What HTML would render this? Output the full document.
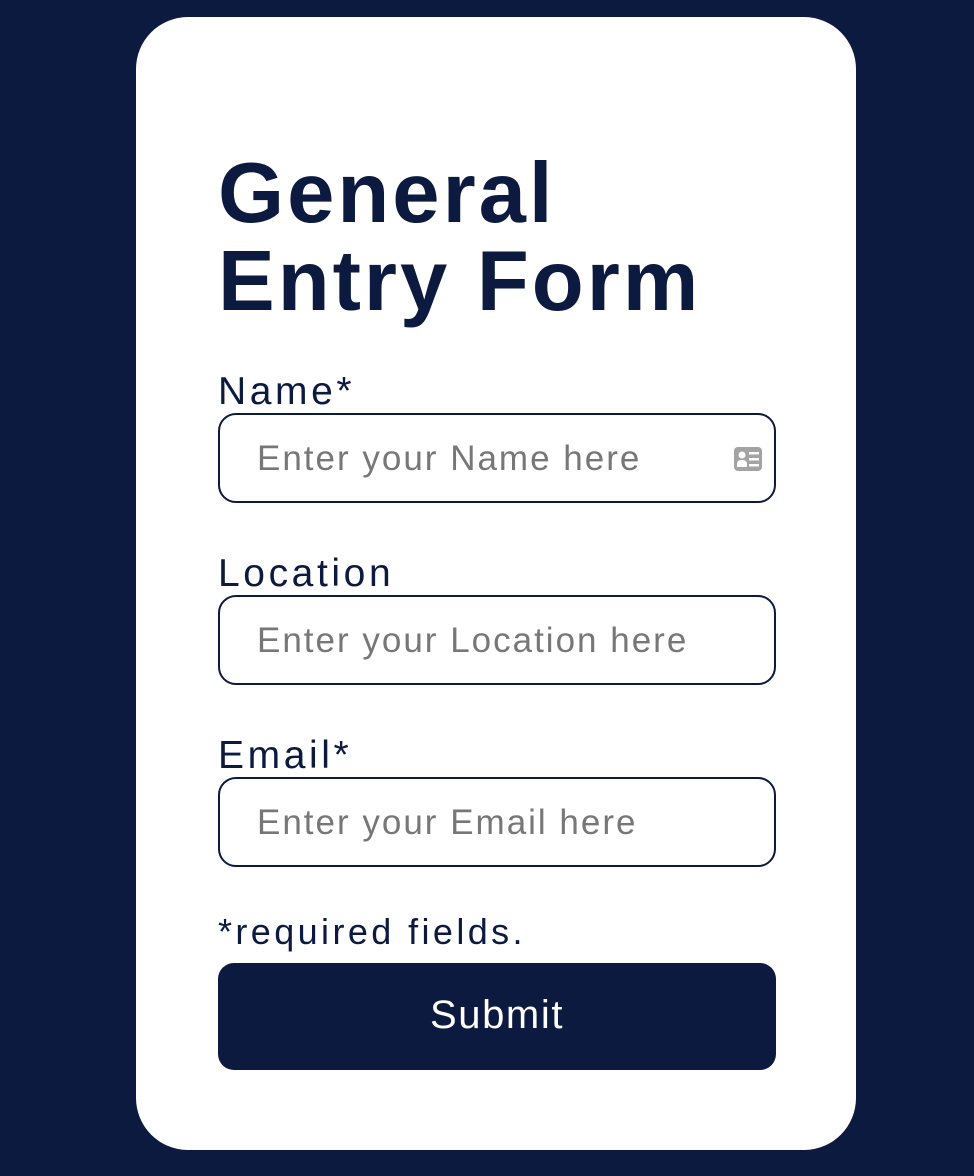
<!DOCTYPE html>
<html><head><style>
body{margin:0;width:974px;height:1176px;background:#0c1a40;position:relative;overflow:hidden;font-family:"Liberation Sans",sans-serif;}
.card{position:absolute;left:136px;top:17px;width:720px;height:1133px;background:#fff;border-radius:52px;}
.t{position:absolute;left:218px;color:#0c1a40;white-space:nowrap;}
h1{position:absolute;left:218px;top:150px;margin:0;font-size:85px;line-height:88px;font-weight:bold;letter-spacing:3px;color:#0c1a40;}
.lbl{font-size:39px;letter-spacing:3.6px;line-height:1;}
.in{position:absolute;left:218px;width:554px;height:86px;border:2px solid #0c1a40;border-radius:18px;}
.in span{position:absolute;left:37px;top:26px;font-size:35px;letter-spacing:2px;color:#777;line-height:1;}
.btn{position:absolute;left:218px;top:963px;width:558px;height:107px;background:#0c1a40;border-radius:16px;color:#fff;font-size:40px;text-align:center;line-height:105px;letter-spacing:1.6px;}
</style></head><body>
<div class="card"></div>
<h1>General<br>Entry Form</h1>
<div class="t lbl" style="top:372px">Name*</div>
<div class="in" style="top:413px"><span>Enter your Name here</span>
<svg style="position:absolute;left:514px;top:32px" width="28" height="24" viewBox="0 0 28 24"><rect width="28" height="24" rx="4" fill="#a3a3a3"/><circle cx="8" cy="8" r="3.5" fill="#fff"/><path d="M3 20v-3a4 4 0 0 1 4-4h2a4 4 0 0 1 4 4v3z" fill="#fff"/><rect x="15" y="5" width="10" height="2.5" fill="#fff"/><rect x="15" y="11" width="10" height="2.5" fill="#fff"/><rect x="15" y="17" width="10" height="2.5" fill="#fff"/></svg></div>
<div class="t lbl" style="top:554px">Location</div>
<div class="in" style="top:595px"><span>Enter your Location here</span></div>
<div class="t lbl" style="top:736px">Email*</div>
<div class="in" style="top:777px"><span>Enter your Email here</span></div>
<div class="t" style="top:914px;font-size:36px;letter-spacing:3.4px;line-height:1">*required fields.</div>
<div class="btn">Submit</div>
</body></html>
